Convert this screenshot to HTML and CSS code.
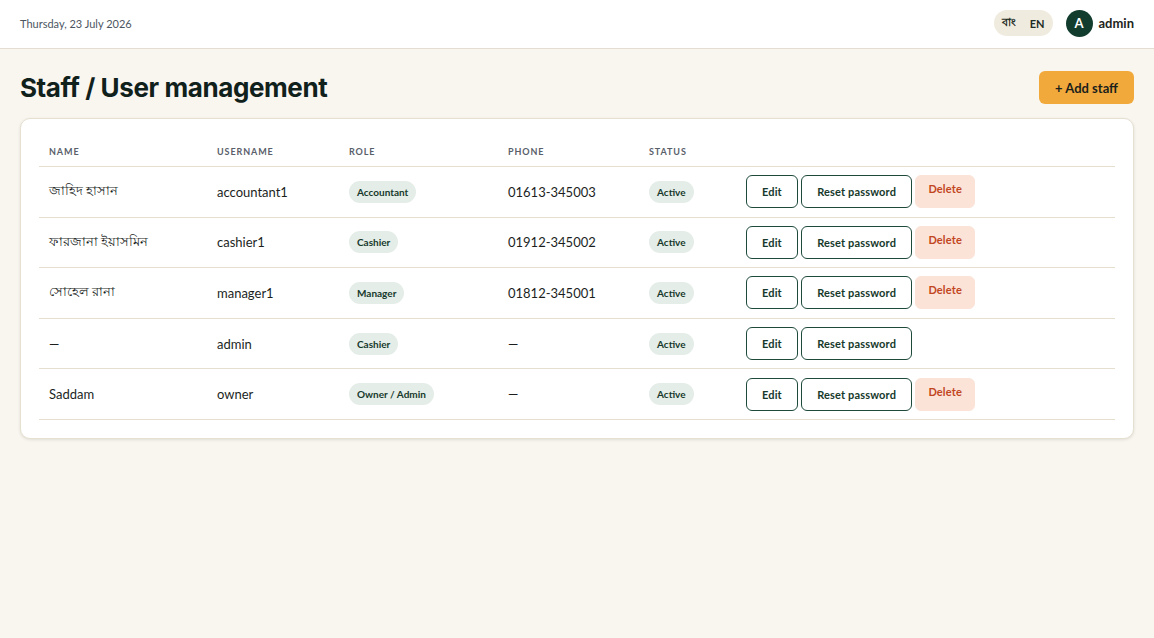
FILE: index.html
```html
<!DOCTYPE html>
<html lang="en">

<head>
    <meta charset="UTF-8">
    <meta name="viewport" content="width=device-width, initial-scale=1.0">
    <title>Staff / User management</title>
    <link rel="stylesheet" href="styles.css">
</head>

<body>

    <header class="topbar">
        <div class="today">Thursday, 23 July 2026</div>
        <div class="topbar-right">
            <div class="lang">
                <span>বাং</span>
                <span>EN</span>
            </div>
            <div class="user">
                <div class="avatar">A</div>
                <span class="user-name">admin</span>
            </div>
        </div>
    </header>

    <main class="page">
        <div class="page-head">
            <h1>Staff / User management</h1>
            <button class="btn-add">+ Add staff</button>
        </div>

        <div class="card">
            <table class="staff-table">
                <thead>
                    <tr>
                        <th class="col-name">Name</th>
                        <th class="col-user">Username</th>
                        <th class="col-role">Role</th>
                        <th class="col-phone">Phone</th>
                        <th class="col-status">Status</th>
                        <th></th>
                    </tr>
                </thead>
                <tbody>
                    <tr>
                        <td>জাহিদ হাসান</td>
                        <td>accountant1</td>
                        <td><span class="badge">Accountant</span></td>
                        <td>01613-345003</td>
                        <td><span class="badge">Active</span></td>
                        <td class="actions">
                            <button class="btn">Edit</button>
                            <button class="btn">Reset password</button>
                            <button class="btn btn-delete">Delete</button>
                        </td>
                    </tr>
                    <tr>
                        <td>ফারজানা ইয়াসমিন</td>
                        <td>cashier1</td>
                        <td><span class="badge">Cashier</span></td>
                        <td>01912-345002</td>
                        <td><span class="badge">Active</span></td>
                        <td class="actions">
                            <button class="btn">Edit</button>
                            <button class="btn">Reset password</button>
                            <button class="btn btn-delete">Delete</button>
                        </td>
                    </tr>
                    <tr>
                        <td>সোহেল রানা</td>
                        <td>manager1</td>
                        <td><span class="badge">Manager</span></td>
                        <td>01812-345001</td>
                        <td><span class="badge">Active</span></td>
                        <td class="actions">
                            <button class="btn">Edit</button>
                            <button class="btn">Reset password</button>
                            <button class="btn btn-delete">Delete</button>
                        </td>
                    </tr>
                    <tr>
                        <td>—</td>
                        <td>admin</td>
                        <td><span class="badge">Cashier</span></td>
                        <td>—</td>
                        <td><span class="badge">Active</span></td>
                        <td class="actions">
                            <button class="btn">Edit</button>
                            <button class="btn">Reset password</button>
                        </td>
                    </tr>
                    <tr>
                        <td>Saddam</td>
                        <td>owner</td>
                        <td><span class="badge">Owner / Admin</span></td>
                        <td>—</td>
                        <td><span class="badge">Active</span></td>
                        <td class="actions">
                            <button class="btn">Edit</button>
                            <button class="btn">Reset password</button>
                            <button class="btn btn-delete">Delete</button>
                        </td>
                    </tr>
                </tbody>
            </table>
        </div>
    </main>

</body>

</html>
```

FILE: styles.css
```css
body {
    font-family: Lato, "Noto Sans", sans-serif;
    margin: 0;
    padding: 0;
    background-color: #f9f6f0;
    color: #1c1f1e;
}

.topbar {
    height: 49px;
    box-sizing: border-box;
    background-color: #fff;
    border-bottom: 1px solid #e5ddd2;
    display: flex;
    align-items: center;
    justify-content: space-between;
    padding: 0 20px 2px;
}

.today {
    font-size: 11px;
    color: #4c5661;
}

.topbar-right {
    display: flex;
    align-items: center;
    gap: 13px;
}

.lang {
    display: flex;
    align-items: center;
    gap: 14px;
    height: 26px;
    padding: 0 8px;
    border-radius: 13px;
    background-color: #f0ebdf;
    font-size: 11px;
    font-weight: 700;
    color: #1d2b25;
}

.user {
    display: flex;
    align-items: center;
    gap: 6px;
}

.avatar {
    width: 27px;
    height: 27px;
    border-radius: 50%;
    background-color: #123d2e;
    color: #fff;
    font-size: 13px;
    font-weight: 700;
    display: flex;
    align-items: center;
    justify-content: center;
}

.user-name {
    font-size: 13px;
    font-weight: 700;
    color: #1d2420;
}

.page {
    padding: 22px 20px;
}

.page-head {
    display: flex;
    align-items: center;
    justify-content: space-between;
    margin-bottom: 14px;
}

h1 {
    margin: 0;
    font-family: Inter, sans-serif;
    font-size: 26px;
    font-weight: 700;
    letter-spacing: -0.4px;
    color: #10201b;
}

.btn-add {
    height: 33px;
    padding: 0 16px;
    border: none;
    border-radius: 6px;
    background-color: #f2a93b;
    font-family: Lato, sans-serif;
    font-size: 13px;
    font-weight: 700;
    color: #1a1f1c;
}

.card {
    background-color: #fff;
    border: 1px solid #e6e0d1;
    border-radius: 10px;
    box-shadow: 0 1px 3px rgba(60, 50, 30, 0.12);
    padding: 18px;
}

.staff-table {
    width: 100%;
    border-collapse: collapse;
}

.staff-table th {
    text-align: left;
    font-size: 9px;
    font-weight: 700;
    text-transform: uppercase;
    letter-spacing: 0.9px;
    color: #59606a;
    padding: 9px 10px 9px;
    border-bottom: 1px solid #e6dfd0;
}

.col-name { width: 148px; }
.col-user { width: 112px; }
.col-role { width: 139px; }
.col-phone { width: 121px; }
.col-status { width: 77px; }

.staff-table td {
    font-size: 13px;
    padding: 0 10px;
    height: 49.6px;
    border-bottom: 1px solid #e6dfd0;
    color: #1c1f1e;
}

.badge {
    display: inline-block;
    padding: 5px 8px;
    border-radius: 11px;
    background-color: #e5ede8;
    font-size: 10px;
    font-weight: 700;
    color: #16392c;
}

.actions {
    white-space: nowrap;
}

.btn {
    height: 33px;
    padding: 0 15px;
    border: 1px solid #1e4a3a;
    border-radius: 6px;
    background-color: #fff;
    font-family: Lato, sans-serif;
    font-size: 11px;
    font-weight: 700;
    letter-spacing: 0.15px;
    color: #16392c;
    vertical-align: middle;
}

.btn-delete {
    border-color: #fbe3d8;
    background-color: #fbe3d8;
    color: #c2461d;
    padding: 0 12px 6px;
}
```
